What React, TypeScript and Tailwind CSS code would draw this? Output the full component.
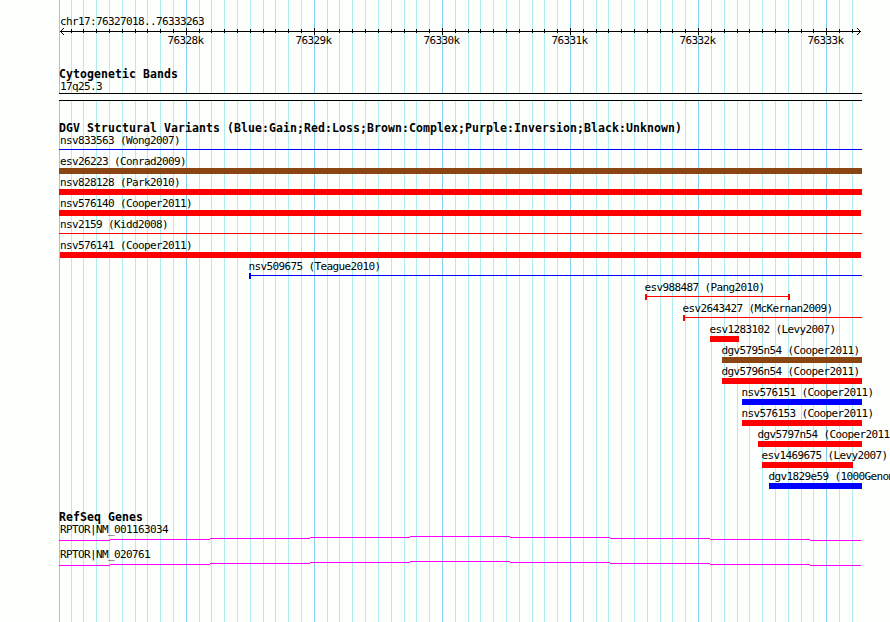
import React from "react";

type Kind = "bar" | "line" | "range";

interface Variant {
  label: string;
  labelX: number;
  start: number;
  end: number;
  kind: Kind;
  color: string;
}

const RED = "bg-[#ff0000]";
const BLUE = "bg-[#0000ff]";
const BROWN = "bg-[#8b4513]";

const variants: Variant[] = [
  { label: "nsv833563 (Wong2007)", labelX: 60, start: 59, end: 862, kind: "line", color: BLUE },
  { label: "esv26223 (Conrad2009)", labelX: 60, start: 59, end: 862, kind: "bar", color: BROWN },
  { label: "nsv828128 (Park2010)", labelX: 60, start: 59, end: 862, kind: "bar", color: RED },
  { label: "nsv576140 (Cooper2011)", labelX: 60, start: 59, end: 861, kind: "bar", color: RED },
  { label: "nsv2159 (Kidd2008)", labelX: 60, start: 59, end: 862, kind: "line", color: RED },
  { label: "nsv576141 (Cooper2011)", labelX: 60, start: 60, end: 861, kind: "bar", color: RED },
  { label: "nsv509675 (Teague2010)", labelX: 248.4, start: 249, end: 862, kind: "range", color: BLUE },
  { label: "esv988487 (Pang2010)", labelX: 644.4, start: 645, end: 790, kind: "range", color: RED },
  { label: "esv2643427 (McKernan2009)", labelX: 682.4, start: 683, end: 862, kind: "range", color: RED },
  { label: "esv1283102 (Levy2007)", labelX: 709.4, start: 710, end: 739, kind: "bar", color: RED },
  { label: "dgv5795n54 (Cooper2011)", labelX: 721.4, start: 722, end: 862, kind: "bar", color: BROWN },
  { label: "dgv5796n54 (Cooper2011)", labelX: 721.4, start: 722, end: 862, kind: "bar", color: RED },
  { label: "nsv576151 (Cooper2011)", labelX: 741.4, start: 742, end: 862, kind: "bar", color: BLUE },
  { label: "nsv576153 (Cooper2011)", labelX: 741.4, start: 742, end: 862, kind: "bar", color: RED },
  { label: "dgv5797n54 (Cooper2011)", labelX: 757.4, start: 758, end: 862, kind: "bar", color: RED },
  { label: "esv1469675 (Levy2007)", labelX: 761.4, start: 762, end: 853, kind: "bar", color: RED },
  { label: "dgv1829e59 (1000Genomes)", labelX: 768.4, start: 769, end: 862, kind: "bar", color: BLUE },
];

const majors = [186, 314, 442, 570, 698, 826];
const minors = [
  71, 83, 96, 109, 122, 135, 147, 160, 173, 199, 211, 224, 237, 250, 263, 275, 288, 301, 327, 339,
  352, 365, 378, 391, 404, 416, 429, 455, 468, 480, 493, 506, 519, 532, 544, 557, 583, 596, 608,
  621, 634, 647, 660, 672, 685, 711, 724, 737, 749, 762, 775, 788, 801, 813, 839, 852,
];

function GridLines() {
  return (
    <svg className="absolute inset-0" width="890" height="622" shapeRendering="crispEdges">
      {minors.map((x) => (
        <rect key={x} x={x} y="0" width="1" height="622" fill="#afeeee" />
      ))}
      {[59, ...majors].map((x) => (
        <rect key={x} x={x} y="0" width="1" height="622" fill="#87ceeb" />
      ))}
    </svg>
  );
}

function Small({ x, children }: { x: number; children: React.ReactNode }) {
  return (
    <div
      className="h-[15px] text-[11px] leading-[18px] tracking-[-0.622px]"
      style={{ paddingLeft: x }}
    >
      {children}
    </div>
  );
}

function Heading({ children }: { children: React.ReactNode }) {
  return (
    <h2 className="h-[13px] pl-[59px] text-[11.5px] font-bold leading-[12px] tracking-[0.077px]">
      {children}
    </h2>
  );
}

function Ruler() {
  return (
    <svg className="block" width="890" height="8" shapeRendering="crispEdges">
      <rect x="60" y="3" width="801" height="1" />
      {minors.map((x) => (
        <rect key={x} x={x} y="1" width="1" height="4" />
      ))}
      {majors.map((x) => (
        <rect key={x} x={x} y="0" width="1" height="7" />
      ))}
      {[1, 2, 3].map((d) => (
        <g key={d}>
          <rect x={60 + d} y={3 - d} width="1" height="1" />
          <rect x={60 + d} y={3 + d} width="1" height="1" />
          <rect x={860 - d} y={3 - d} width="1" height="1" />
          <rect x={860 - d} y={3 + d} width="1" height="1" />
        </g>
      ))}
    </svg>
  );
}

function VariantRow({ v }: { v: Variant }) {
  const size = { marginLeft: v.start, width: v.end - v.start };
  return (
    <div className="h-[21px]">
      <Small x={v.labelX}>{v.label}</Small>
      {v.kind === "bar" && <div className={`h-[6px] ${v.color}`} style={size} />}
      {v.kind === "line" && (
        <div className="h-[6px] pt-[2px]" style={size}>
          <div className={`h-px ${v.color}`} />
        </div>
      )}
      {v.kind === "range" && (
        <div className="flex h-[6px]" style={size}>
          <div className={`h-[6px] w-[2px] ${v.color}`} />
          <div className={`mt-[2px] h-px flex-1 ${v.color}`} />
          {v.end < 862 && <div className={`h-[6px] w-[2px] ${v.color}`} />}
        </div>
      )}
    </div>
  );
}

function Transcript({ label }: { label: string }) {
  const steps = [
    [59, 110, 4], [110, 210, 3], [210, 310, 2], [310, 410, 1], [410, 510, 0],
    [510, 610, 1], [610, 710, 2], [710, 810, 3], [810, 861, 4],
  ];
  return (
    <div className="h-[25px]">
      <Small x={60}>{label}</Small>
      <svg className="block" width="890" height="5" shapeRendering="crispEdges">
        {steps.map(([a, b, y]) => (
          <rect key={a} x={a} y={y} width={b - a} height="1" fill="#ff00ff" />
        ))}
      </svg>
    </div>
  );
}

export default function App() {
  return (
    <div className="relative h-[622px] w-[890px] overflow-hidden whitespace-pre bg-[#fcfffc] font-['DejaVu_Sans_Mono',monospace] text-black">
      <GridLines />
      <main className="relative">
        <section className="h-[67px] pt-[13px]">
          <Small x={60}>chr17:76327018..76333263</Small>
          <Ruler />
          <div className="-mt-[4px] flex pl-[167.5px]">
            {majors.map((x, i) => (
              <div
                key={x}
                className="w-[128px] shrink-0 text-[11px] leading-[18px] tracking-[-0.622px]"
              >
                {`${76328 + i}k`}
              </div>
            ))}
          </div>
        </section>

        <section className="h-[54px] pt-px">
          <Heading>Cytogenetic Bands</Heading>
          <div className="-mt-[3px]">
            <Small x={60}>17q25.3</Small>
          </div>
          <div className="ml-[59px] h-[8px] w-[803px] border-y border-black bg-[#fcfffc]" />
        </section>

        <section className="h-[389px] pt-px">
          <Heading>
            DGV Structural Variants (Blue:Gain;Red:Loss;Brown:Complex;Purple:Inversion;Black:Unknown)
          </Heading>
          <div className="-mt-[3px]">
            {variants.map((v) => (
              <VariantRow key={v.label} v={v} />
            ))}
          </div>
        </section>

        <section className="pt-px">
          <Heading>RefSeq Genes</Heading>
          <div className="-mt-[3px]">
            <Transcript label="RPTOR|NM_001163034" />
            <Transcript label="RPTOR|NM_020761" />
          </div>
        </section>
      </main>
    </div>
  );
}
